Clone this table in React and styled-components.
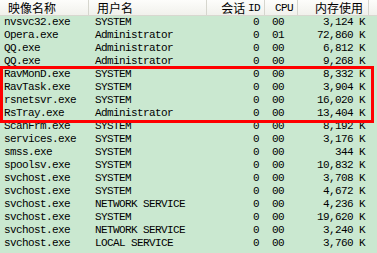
import React from "react";
import styled, { createGlobalStyle } from "styled-components";

const Global = createGlobalStyle`
  html, body { margin: 0; padding: 0; background: #cae8d0; }
  #root { width: 377px; height: 253px; overflow: hidden; }
`;

const COLS = "89px 118px 58px 33px 71px 1fr";

const Panel = styled.div`
  position: relative;
  width: 377px;
  height: 253px;
  background: #cae8d0;
  overflow: hidden;
`;

const HeaderRow = styled.div`
  display: grid;
  grid-template-columns: ${COLS};
  height: 16px;
  background: linear-gradient(#fdfdfb, #f1f1ec);
  border-bottom: 1px solid #d8d8d0;
  box-sizing: border-box;
`;

const HeadCell = styled.div`
  display: flex;
  align-items: center;
  justify-content: ${(p) => (p.$right ? "flex-end" : "flex-start")};
  padding: ${(p) => p.$pad};
  border-right: ${(p) => (p.$last ? "none" : "1px solid #d6d6ce")};
  font-family: "Noto Sans CJK SC", "Liberation Mono", sans-serif;
  font-size: 12px;
  line-height: 14px;
  color: #000;
  white-space: pre;
  box-sizing: border-box;
`;

const Latin = styled.span`
  font-family: "Liberation Mono", monospace;
  font-size: 11px;
  letter-spacing: -0.6px;
`;

const Body = styled.div`
  display: flex;
  flex-direction: column;
`;

const Row = styled.div`
  display: grid;
  grid-template-columns: ${COLS};
  height: 13px;
`;

const Cell = styled.div`
  display: flex;
  align-items: center;
  justify-content: ${(p) => (p.$right ? "flex-end" : "flex-start")};
  padding: ${(p) => p.$pad};
  font-family: "Liberation Mono", monospace;
  font-size: 11px;
  letter-spacing: -0.6px;
  line-height: 13px;
  color: #000;
  white-space: pre;
  box-sizing: border-box;
`;

const Highlight = styled.div`
  position: absolute;
  left: 0;
  top: 66px;
  width: 374px;
  height: 57px;
  border: 3px solid #ff0000;
  box-sizing: border-box;
  pointer-events: none;
`;

const rows = [
  ["nvsvc32.exe", "SYSTEM", "0", "00", "3,124 K"],
  ["Opera.exe", "Administrator", "0", "01", "72,860 K"],
  ["QQ.exe", "Administrator", "0", "00", "6,812 K"],
  ["QQ.exe", "Administrator", "0", "00", "9,268 K"],
  ["RavMonD.exe", "SYSTEM", "0", "00", "8,332 K"],
  ["RavTask.exe", "SYSTEM", "0", "00", "3,904 K"],
  ["rsnetsvr.exe", "SYSTEM", "0", "00", "16,020 K"],
  ["RsTray.exe", "Administrator", "0", "00", "13,404 K"],
  ["ScanFrm.exe", "SYSTEM", "0", "00", "8,192 K"],
  ["services.exe", "SYSTEM", "0", "00", "3,176 K"],
  ["smss.exe", "SYSTEM", "0", "00", "344 K"],
  ["spoolsv.exe", "SYSTEM", "0", "00", "10,832 K"],
  ["svchost.exe", "SYSTEM", "0", "00", "3,708 K"],
  ["svchost.exe", "SYSTEM", "0", "00", "4,672 K"],
  ["svchost.exe", "NETWORK SERVICE", "0", "00", "4,236 K"],
  ["svchost.exe", "SYSTEM", "0", "00", "19,620 K"],
  ["svchost.exe", "NETWORK SERVICE", "0", "00", "3,240 K"],
  ["svchost.exe", "LOCAL SERVICE", "0", "00", "3,760 K"],
];

export default function App() {
  return (
    <Panel>
      <Global />
      <HeaderRow>
        <HeadCell $pad="0 0 0 8px">映像名称</HeadCell>
        <HeadCell $pad="0 0 0 8px">用户名</HeadCell>
        <HeadCell $right $pad="0 4px 0 0">
          会话 <Latin>ID</Latin>
        </HeadCell>
        <HeadCell $pad="0 0 0 10px">
          <Latin>CPU</Latin>
        </HeadCell>
        <HeadCell $right $pad="0 5px 0 0">内存使用</HeadCell>
        <HeadCell $last />
      </HeaderRow>
      <Body>
        {rows.map((r, i) => (
          <Row key={i}>
            <Cell $pad="0 0 0 4px">{r[0]}</Cell>
            <Cell $pad="0 0 0 6px">{r[1]}</Cell>
            <Cell $right $pad="0 6px 0 0">{r[2]}</Cell>
            <Cell $pad="0 0 0 7px">{r[3]}</Cell>
            <Cell $right $pad="0 4px 0 0">{r[4]}</Cell>
            <Cell />
          </Row>
        ))}
      </Body>
      <Highlight />
    </Panel>
  );
}
